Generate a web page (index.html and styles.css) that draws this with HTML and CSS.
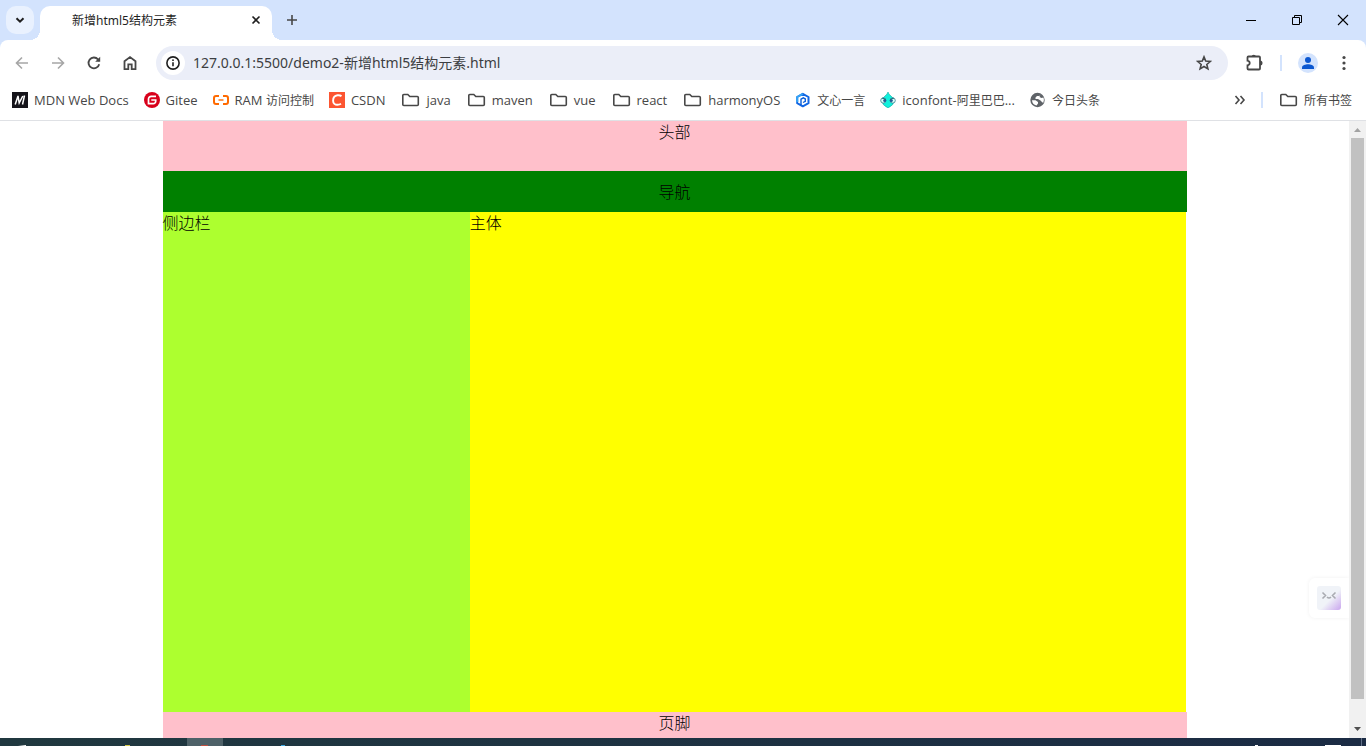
FILE: index.html
```html
<!DOCTYPE html>
<html lang="zh-CN">
<head>
<meta charset="utf-8">
<title>新增html5结构元素</title>
<link rel="stylesheet" href="styles.css">
</head>
<body>
<div class="tabstrip">
  <button class="tab-search" aria-label="搜索标签页"><svg width="12" height="12" viewBox="0 0 12 12"><path d="M2.500 4.200 6 7.700 9.500 4.200" fill="none" stroke="#1f1f1f" stroke-width="2"/></svg></button>
  <div class="tab">
    <span class="tab-title">新增html5结构元素</span>
    <button class="tab-close" aria-label="关闭"><svg width="10" height="10" viewBox="0 0 10 10"><path d="M1.500 1.500 8.500 8.500M8.500 1.500 1.500 8.500" stroke="#1f1f1f" stroke-width="1.600"/></svg></button>
  </div>
  <button class="tab-new" aria-label="新标签页"><svg width="12" height="12" viewBox="0 0 12 12"><path d="M6 1v10M1 6h10" stroke="#474747" stroke-width="1.600"/></svg></button>
  <div class="window-buttons">
    <button aria-label="最小化"><svg width="12" height="12" viewBox="0 0 12 12"><path d="M1 6.500h10" stroke="#000"/></svg></button>
    <button aria-label="还原"><svg width="12" height="12" viewBox="0 0 12 12"><path d="M1.500 3.500h7v7h-7zM3.500 3.500v-2h7v7h-2" fill="none" stroke="#000"/></svg></button>
    <button aria-label="关闭窗口"><svg width="12" height="12" viewBox="0 0 12 12"><path d="M1 1l10 10M11 1 1 11" stroke="#000" stroke-width="1.100"/></svg></button>
  </div>
</div>
<div class="browser">
  <div class="toolbar">
    <button class="tool" aria-label="后退" disabled><svg width="16" height="16" viewBox="0 0 16 16"><path d="M14 8H3M8 2.500 2.500 8 8 13.500" fill="none" stroke="#a6a6a6" stroke-width="1.600"/></svg></button>
    <button class="tool" aria-label="前进" disabled><svg width="16" height="16" viewBox="0 0 16 16"><path d="M2 8h11M8 2.500 13.500 8 8 13.500" fill="none" stroke="#a6a6a6" stroke-width="1.600"/></svg></button>
    <button class="tool" aria-label="重新加载"><svg width="16" height="16" viewBox="0 0 16 16"><path d="M13.200 9.200A5.400 5.400 0 1 1 12 4.300L13.300 5.800" fill="none" stroke="#474747" stroke-width="1.800"/><path d="M14.200 1.800v5H9.200z" fill="#474747"/></svg></button>
    <button class="tool" aria-label="主页"><svg width="16" height="16" viewBox="0 0 16 16"><path d="M2.500 14.200V6.300L8 2.100l5.500 4.200v7.900H9.700V9.300H6.300v4.900z" fill="none" stroke="#474747" stroke-width="1.800"/></svg></button>
    <div class="address">
      <button class="site-info" aria-label="查看网站信息"><svg width="14" height="14" viewBox="0 0 14 14"><circle cx="7" cy="7" r="6.100" fill="none" stroke="#1f1f1f" stroke-width="1.600"/><path d="M7 6.200v4" stroke="#1f1f1f" stroke-width="1.600"/><circle cx="7" cy="4.200" r=".9" fill="#1f1f1f"/></svg></button>
      <input class="url" type="text" aria-label="地址" value="127.0.0.1:5500/demo2-新增html5结构元素.html">
      <button class="star" aria-label="添加书签"><svg width="16" height="16" viewBox="0 0 16 16"><path d="M8 1.900 9.700 6.100 14.300 6.500 10.800 9.500 11.900 13.900 8 11.500 4.100 13.900 5.200 9.500 1.700 6.500 6.300 6.100z" fill="none" stroke="#474747" stroke-width="1.600"/></svg></button>
    </div>
    <div class="tool-end">
      <button class="tool" aria-label="扩展程序"><svg width="20" height="20" viewBox="0 0 20 20"><path d="M3.500 4.500a1 1 0 0 1 1-1h10.500a1 1 0 0 1 1 1v11a1 1 0 0 1-1 1H4.500a1 1 0 0 1-1-1v-3.200q2.200-.5 2.200-2.300T3.500 7.700z" fill="none" stroke="#474747" stroke-width="1.800"/><path d="M7.500 3.500a2.300 2.300 0 0 1 4.500 0zM16 7.500a2.500 2.500 0 0 1 0 5z" fill="#474747"/></svg></button>
      <span class="divider"></span>
      <button class="tool" aria-label="个人资料"><svg width="20" height="20" viewBox="0 0 20 20"><circle cx="10" cy="10" r="10" fill="#d3e3fd"/><circle cx="10" cy="7" r="3" fill="#0b57d0"/><path d="M4 16v-1.600C4 12.400 7.500 11.300 10 11.300s6 1.100 6 3.100V16z" fill="#0b57d0"/></svg></button>
      <button class="tool" aria-label="菜单"><svg width="4" height="16" viewBox="0 0 4 16"><g fill="#474747"><circle cx="2" cy="2.500" r="1.600"/><circle cx="2" cy="8" r="1.600"/><circle cx="2" cy="13.500" r="1.600"/></g></svg></button>
    </div>
  </div>
  <svg class="symbols" aria-hidden="true"><symbol id="folder" viewBox="0 0 20 16"><path d="M2.800 3.500a1 1 0 0 1 1-1h4l2 2h7.500a1 1 0 0 1 1 1v7a1 1 0 0 1-1 1H3.800a1 1 0 0 1-1-1z" fill="none" stroke="#474747" stroke-width="1.600"/></symbol></svg>
  <nav class="bookmarks" aria-label="书签栏">
    <a href="#"><svg width="16" height="16" viewBox="0 0 16 16"><path fill="#15141a" d="M0 0h16v16H0z"/><path d="M3.200 12.500 6 4 7.200 11l3.600-7M12.500 3.500l-2 9" fill="none" stroke="#fff" stroke-width="1.500"/></svg>MDN Web Docs</a>
    <a href="#"><svg width="16" height="16" viewBox="0 0 16 16"><circle cx="8" cy="8" r="8" fill="#d8001b"/><path d="M12 4.300H7.200A2.700 2.700 0 0 0 4.500 7v4.700h4.800a2.400 2.400 0 0 0 2.400-2.400V8H7.300" fill="none" stroke="#fff" stroke-width="1.700"/></svg>Gitee</a>
    <a href="#"><svg width="16" height="16" viewBox="0 0 16 16"><path d="M6 4H3Q1 4 1 6v4q0 2 2 2h3M10 4h3q2 0 2 2v4q0 2-2 2h-3" fill="none" stroke="#ff6a00" stroke-width="2"/><path d="M5.500 8h5" stroke="#ff6a00" stroke-width="1.400"/></svg><span>RAM <span class="cjk">访问控制</span></span></a>
    <a href="#"><svg width="16" height="16" viewBox="0 0 16 16"><path fill="#fc5531" d="M0 0h16v16H0z"/><path d="M12.500 4.100Q10.800 3 8.500 3.300C5.600 3.700 4.100 5.900 4.100 8.700s2 4.300 4.400 4.100q2 0 3.500-1" fill="none" stroke="#fff" stroke-width="1.900"/></svg>CSDN</a>
    <a href="#"><svg width="20" height="16"><use href="#folder"/></svg>java</a>
    <a href="#"><svg width="20" height="16"><use href="#folder"/></svg>maven</a>
    <a href="#"><svg width="20" height="16"><use href="#folder"/></svg>vue</a>
    <a href="#"><svg width="20" height="16"><use href="#folder"/></svg>react</a>
    <a href="#"><svg width="20" height="16"><use href="#folder"/></svg>harmonyOS</a>
    <a href="#"><svg width="16" height="16" viewBox="0 0 16 16"><path d="M7.800 1.800 13.500 5v6.200L7.800 14.300 2.200 11.200V5z" fill="none" stroke="#1266e3" stroke-width="2" stroke-linejoin="round"/><path d="M7.800 1.800 2.200 5v5" fill="none" stroke="#35a3f5" stroke-width="2"/><path d="M6 13V7.200l2.300-1.400 2 1.200v2.300L8 10.500" fill="none" stroke="#075dd9" stroke-width="1.400"/></svg><span class="cjk">文心一言</span></a>
    <a href="#"><svg width="16" height="16" viewBox="0 0 16 16"><path d="M8 0q.6 2.500 3 4 3 2 3 5 0 4-6 7-6-3-6-7 0-3 3-5Q7.400 2.500 8 0z" fill="#10f0dc" stroke="#16a9a3" stroke-width=".6"/><circle cx="3.300" cy="8.500" r="2.600" fill="#d8fff9" stroke="#367b8c" stroke-width=".8"/><circle cx="12.700" cy="8.500" r="2.600" fill="#d8fff9" stroke="#367b8c" stroke-width=".8"/><circle cx="4.700" cy="8.600" r="1.500" fill="#245b94"/><circle cx="11.300" cy="8.600" r="1.500" fill="#245b94"/><path d="m2 6 4 1.500M14 6l-4 1.500" stroke="#176c7c"/></svg><span>iconfont-<span class="cjk">阿里巴巴</span>...</span></a>
    <a href="#"><svg width="16" height="16" viewBox="0 0 16 16"><circle cx="7.500" cy="8" r="7.200" fill="#5f6368"/><path d="M10.500 2.200 9.500 4H7L5.500 5.500V7H8l2.500 1.500L12 10l1.200 1q1.300-3 .3-5.500L11.500 6 9.500 5zM2 8.200h3.500L8 10v1.500L6.500 13.500Q2.300 12.500 2 8.200z" fill="#fff"/></svg><span class="cjk">今日头条</span></a>
    <span class="bookmarks-end">
      <button aria-label="更多书签"><svg width="12" height="12" viewBox="0 0 12 12"><path d="M1.500 2 5 6 1.500 10M6.500 2 10 6 6.500 10" fill="none" stroke="#474747" stroke-width="1.600"/></svg></button>
      <span class="divider"></span>
      <a href="#"><svg width="20" height="16"><use href="#folder"/></svg><span class="cjk">所有书签</span></a>
    </span>
  </nav>
  <div class="viewport">
    <div class="page">
      <div class="container">
        <header class="page-header">头部</header>
        <nav class="page-nav">导航</nav>
        <div class="content">
          <aside class="sidebar">侧边栏</aside>
          <main class="main">主体</main>
        </div>
        <footer class="page-footer">页脚</footer>
      </div>
      <button class="assistant" aria-label="助手"><svg width="24" height="24" viewBox="0 0 24 24"><defs><linearGradient id="face" x1="0" y1="0" x2="1" y2="1"><stop offset=".55" stop-color="#f0f3f8"/><stop offset="1" stop-color="#c9a5ee"/></linearGradient></defs><rect width="24" height="24" rx="3" fill="url(#face)"/><path d="m5.500 6.500 3 3-3 3M18.500 6.500l-3 3 3 3M10 11q2 2 4 0" fill="none" stroke="#a9abb1" stroke-width="1.600"/></svg></button>
    </div>
    <div class="scrollbar" aria-hidden="true">
      <svg width="17" height="17" viewBox="0 0 17 17"><path d="M5 11h7L8.500 7z" fill="#a3a3a3"/></svg>
      <span class="thumb"></span>
      <svg width="17" height="17" viewBox="0 0 17 17"><path d="M5 6h7l-3.500 4z" fill="#505050"/></svg>
    </div>
  </div>
</div>
<div class="taskbar" aria-hidden="true">
  <svg width="300" height="8" viewBox="0 0 300 8"><path fill="#4e6168" d="M187 0h36v8h-36z"/><path fill="#fff" d="m18 8 8-1v1z"/><path fill="#d5c84a" d="M125 7h5v1h-5z"/><path fill="#c14f3f" d="M201 7h7v1h-7z"/><path fill="#3ca9e2" d="M281 7h4v1h-4z"/></svg>
  <svg width="112" height="8" viewBox="0 0 112 8"><path fill="#fff" d="M1 7h3v1H1zM71 7h16v1H71z"/><path fill="#627088" d="M107 0h1v8h-1z"/></svg>
</div>
</body>
</html>
```
FILE: styles.css
```css
* { box-sizing: border-box; }
body {
  margin: 0;
  height: 100vh;
  display: flex;
  flex-direction: column;
  overflow: hidden;
  background: #d3e3fd;
  color: #1f1f1f;
  font-family: "Noto Sans", "Noto Sans CJK SC", sans-serif;
  font-size: 12px;
}
button {
  display: flex;
  align-items: center;
  justify-content: center;
  padding: 0;
  border: 0;
  background: none;
}
svg { display: block; flex: none; }
.symbols { position: absolute; width: 0; height: 0; }

.tabstrip { display: flex; height: 40px; flex: none; padding-left: 6px; }
.tab-search { width: 28px; height: 28px; margin: 6px 6px 0 0; border-radius: 10px; background: #e9f1fe; }
.tab {
  position: relative;
  display: flex;
  align-items: center;
  justify-content: space-between;
  width: 232px;
  height: 34px;
  margin-top: 6px;
  padding: 0 8px 6px 32px;
  border-radius: 10px 10px 0 0;
  background: #fff;
}
.tab::before, .tab::after {
  content: "";
  position: absolute;
  bottom: 0;
  width: 10px;
  height: 10px;
}
.tab::before { right: 100%; background: radial-gradient(circle at 0 0, transparent 10px, #fff 10px); }
.tab::after { left: 100%; background: radial-gradient(circle at 100% 0, transparent 10px, #fff 10px); }
.tab-close { width: 16px; height: 16px; }
.tab-new { width: 28px; height: 28px; margin: 6px 0 0 6px; }
.window-buttons { display: flex; margin-left: auto; }
.window-buttons button { width: 46px; height: 40px; }

.browser {
  flex: 1;
  min-height: 0;
  display: flex;
  flex-direction: column;
  border-radius: 8px 8px 0 0;
  background: #fff;
}
.toolbar { display: flex; align-items: center; flex: none; height: 46px; padding: 0 4px; }
.tool { width: 36px; height: 34px; }
.address {
  display: flex;
  align-items: center;
  flex: 1;
  height: 34px;
  margin-left: 8px;
  padding: 0 12px 0 5px;
  border-radius: 17px;
  background: #ebeef8;
}
.site-info { width: 24px; height: 24px; border-radius: 50%; background: #fff; }
.url {
  flex: 1;
  min-width: 0;
  height: 24px;
  margin: 0;
  padding: 0 0 2px 8px;
  border: 0;
  background: none;
  color: #3c3e42;
  font: inherit;
  font-size: 14px;
}
.star { width: 24px; height: 24px; }
.tool-end { display: flex; align-items: center; padding-left: 8px; }
.divider { width: 2px; height: 16px; background: #d3e3fd; }
.tool-end .divider { margin: 0 8px; }

.bookmarks {
  display: flex;
  align-items: center;
  gap: 15px;
  flex: none;
  height: 35px;
  padding: 0 14px 6px 12px;
  border-bottom: 1px solid #dfe1e5;
  font-family: "Open Sans", "Noto Sans CJK SC", sans-serif;
  font-size: 13px;
  white-space: nowrap;
}
.bookmarks a { display: flex; align-items: center; gap: 6px; color: #474747; text-decoration: none; }
.cjk { font-size: 12px; }
.bookmarks-end { display: flex; align-items: center; gap: 15px; margin-left: auto; }

.viewport { display: flex; flex: 1; min-height: 0; }
.page {
  position: relative;
  flex: 1;
  overflow: hidden;
  color: #000;
  font-family: "Noto Sans CJK SC", sans-serif;
  font-size: 16px;
  font-weight: 300;
  line-height: 21px;
}
.container { width: 76%; max-width: 1024px; margin: 0 auto; }
.page-header, .page-footer { height: 50px; background: pink; text-align: center; }
.page-nav { padding: 10px 0; background: green; text-align: center; }
.content { display: flex; height: 500px; }
.sidebar { width: 30%; background: greenyellow; }
.main { flex: 1; margin-right: 1px; background: yellow; }
.assistant {
  position: absolute;
  right: 0;
  bottom: 120px;
  width: 40px;
  height: 40px;
  border-radius: 6px 0 0 6px;
  background: #fff;
  box-shadow: 0 0 4px #0000000f;
}
.scrollbar { display: flex; flex-direction: column; width: 17px; background: #f1f1f1; }
.thumb { flex: 1; margin: 0 2px 22px; background: #c1c1c1; }

.taskbar {
  display: flex;
  flex: none;
  height: 8px;
  justify-content: space-between;
  background: linear-gradient(90deg, #20383f, #1b2b44);
}
```
